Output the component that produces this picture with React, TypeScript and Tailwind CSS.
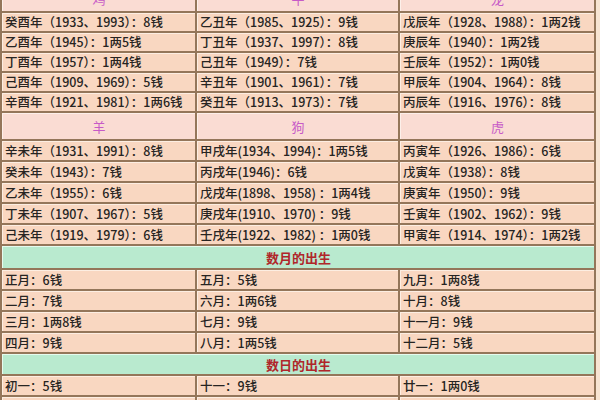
const zodiac = [
  {
    heads: ['鸡', '牛', '龙'],
    rows: [
      ['癸酉年（1933、1993）：8钱', '乙丑年（1985、1925）：9钱', '戊辰年（1928、1988）：1两2钱'],
      ['乙酉年（1945）：1两5钱', '丁丑年（1937、1997）：8钱', '庚辰年（1940）：1两2钱'],
      ['丁酉年（1957）：1两4钱', '己丑年（1949）：7钱', '壬辰年（1952）：1两0钱'],
      ['己酉年（1909、1969）：5钱', '辛丑年（1901、1961）：7钱', '甲辰年（1904、1964）：8钱'],
      ['辛酉年（1921、1981）：1两6钱', '癸丑年（1913、1973）：7钱', '丙辰年（1916、1976）：8钱'],
    ],
    rowH: 'h-[18px]',
  },
  {
    heads: ['羊', '狗', '虎'],
    rows: [
      ['辛未年（1931、1991）：8钱', '甲戌年(1934、1994)：1两5钱', '丙寅年（1926、1986）：6钱'],
      ['癸未年（1943）：7钱', '丙戌年(1946)：6钱', '戊寅年（1938）：8钱'],
      ['乙未年（1955）：6钱', '戊戌年(1898、1958) ：1两4钱', '庚寅年（1950）：9钱'],
      ['丁未年（1907、1967）：5钱', '庚戌年(1910、1970) ：9钱', '壬寅年（1902、1962）：9钱'],
      ['己未年（1919、1979）：6钱', '壬戌年(1922、1982) ：1两0钱', '甲寅年（1914、1974）：1两2钱'],
    ],
    rowH: 'h-[19px]',
  },
];

const months = [
  ['正月：6钱', '五月：5钱', '九月：1两8钱'],
  ['二月：7钱', '六月：1两6钱', '十月：8钱'],
  ['三月：1两8钱', '七月：9钱', '十一月：9钱'],
  ['四月：9钱', '八月：1两5钱', '十二月：5钱'],
];

const days = [
  ['初一：5钱', '十一：9钱', '廿一：1两0钱'],
  ['初二：1两0钱', '十二：1两7钱', '廿二：9钱'],
];

const cell =
  'flex items-center pl-[2px] border-t border-l border-[#fdeee2] bg-[#f9d7c1] text-[12.5px] font-medium leading-none text-[#262422] whitespace-nowrap overflow-hidden';

function DataRow({ items, h }: { items: string[]; h: string }) {
  return (
    <>
      {items.map((t) => (
        <div key={t} className={`${cell} ${h}`}>
          {t}
        </div>
      ))}
    </>
  );
}

function GreenHead({ label, h }: { label: string; h: string }) {
  return (
    <div
      className={`col-span-3 ${h} flex items-center justify-center border-t border-l border-[#e6fbef] bg-[#b9eacf] text-[13px] font-bold text-[#b0262a]`}
    >
      {label}
    </div>
  );
}

export default function App() {
  return (
    <div
      className="w-[600px] h-[400px] overflow-hidden bg-[#f7e4d2]"
      style={{ fontFamily: '"Noto Sans CJK SC", "Noto Sans", sans-serif' }}
    >
      {/* top header row is meant to be cut off, as in the source picture */}
      <div className="-mt-[15px] w-[596px] grid grid-cols-[193px_201px_194px] gap-[2px] px-[2px] bg-[#94765a]">
        {zodiac.map((sec) => (
          <div key={sec.heads[0]} className="contents">
            {sec.heads.map((a) => (
              <div
                key={a}
                className="h-[26px] flex items-center justify-center border-t border-l border-[#fdf0ea] bg-[#fadcd3] text-[13px] text-[#c75ac7]"
              >
                {a}
              </div>
            ))}
            {sec.rows.map((r) => (
              <DataRow key={r[0]} items={r} h={sec.rowH} />
            ))}
          </div>
        ))}

        <GreenHead label="数月的出生" h="h-[22px]" />
        {months.map((r) => (
          <DataRow key={r[0]} items={r} h="h-[19px]" />
        ))}

        <GreenHead label="数日的出生" h="h-[20px]" />
        {days.map((r) => (
          <DataRow key={r[0]} items={r} h="h-[19px]" />
        ))}
      </div>
    </div>
  );
}
